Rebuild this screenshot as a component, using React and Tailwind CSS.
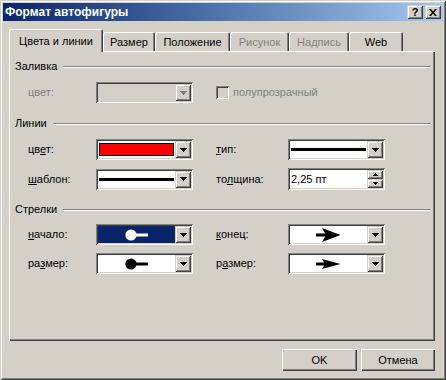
import React from "react";

const raised =
  "shadow-[inset_1px_1px_0_#d4d0c8,inset_-1px_-1px_0_#404040,inset_2px_2px_0_#ffffff,inset_-2px_-2px_0_#808080]";
const sunken =
  "shadow-[inset_1px_1px_0_#808080,inset_-1px_-1px_0_#ffffff,inset_2px_2px_0_#404040,inset_-2px_-2px_0_#d4d0c8]";
const pushBtn =
  "shadow-[inset_1px_1px_0_#ffffff,inset_-1px_-1px_0_#404040,inset_-2px_-2px_0_#808080]";

/* small pixel arrows */
function DownArrow({ gray }) {
  return (
    <svg width="7" height="4" viewBox="0 0 7 4" className="block">
      <path d="M0 0h7v1h-1v1h-1v1h-1v1h-1v-1h-1v-1h-1v-1h-1z" fill={gray ? "#808080" : "#000"} />
    </svg>
  );
}

function SpinArrow({ up }) {
  return (
    <svg width="5" height="3" viewBox="0 0 5 3" className="block">
      {up ? (
        <path d="M2 0h1v1h1v1h1v1h-5v-1h1v-1h1z" fill="#000" />
      ) : (
        <path d="M0 0h5v1h-1v1h-1v1h-1v-1h-1v-1h-1z" fill="#000" />
      )}
    </svg>
  );
}

function Combo({ children, disabled, navy }) {
  return (
    <div
      className={`w-[97px] h-[21px] p-[2px] flex ${sunken} ${disabled ? "bg-[#d4d0c8]" : "bg-white"}`}
    >
      <div className={`flex-1 flex items-center justify-center ${navy ? "bg-[#0a246a]" : ""}`}>
        {children}
      </div>
      <div className={`w-[16px] h-full bg-[#d4d0c8] flex items-center justify-center ${raised}`}>
        <DownArrow gray={disabled} />
      </div>
    </div>
  );
}

function Header({ title }) {
  return (
    <div className="flex items-center h-[13px] pl-[6px] pr-[4px]">
      <span>{title}</span>
      <div className="flex-1 ml-[6px] h-[2px] border-t border-t-[#808080] border-b border-b-white" />
    </div>
  );
}

function Ball({ color }) {
  return (
    <svg width="24" height="12" viewBox="0 0 24 12" className="block">
      <circle cx="6" cy="6" r="5.6" fill={color} />
      <rect x="10" y="4.5" width="13" height="3" fill={color} />
    </svg>
  );
}

function Arrow({ big }) {
  return big ? (
    <svg width="25" height="14" viewBox="0 0 25 14" className="block">
      <rect x="0" y="5.5" width="11" height="3" fill="#000" />
      <path d="M6 0 L24.5 7 L6 14 L10 7 Z" fill="#000" />
    </svg>
  ) : (
    <svg width="25" height="10" viewBox="0 0 25 10" className="block">
      <rect x="0" y="3.5" width="11" height="3" fill="#000" />
      <path d="M6 0 L24.5 5 L6 10 L9 5 Z" fill="#000" />
    </svg>
  );
}

const tabs = [
  { label: "Размер", w: "w-[52px]" },
  { label: "Положение", w: "w-[75px]" },
  { label: "Рисунок", w: "w-[59px]", off: true },
  { label: "Надпись", w: "w-[60px]", off: true },
  { label: "Web", w: "w-[54px]" },
];

export default function App() {
  return (
    <div
      className={`w-[446px] h-[380px] p-[3px] bg-[#d4d0c8] flex flex-col text-[11px] leading-[13px] text-black font-['Liberation_Sans',Arial,sans-serif] ${raised}`}
    >
      {/* title bar */}
      <div className="h-[18px] shrink-0 flex items-center justify-between pl-[2px] pr-[2px] bg-linear-to-r from-[#0a246a] to-[#a6caf0]">
        <span className="text-white font-bold text-[12px]">Формат автофигуры</span>
        <div className="flex gap-[2px]">
          <div className={`w-[16px] h-[14px] bg-[#d4d0c8] flex items-center justify-center font-bold text-[11px] leading-none ${raised}`}>
            ?
          </div>
          <div className={`w-[16px] h-[14px] bg-[#d4d0c8] flex items-center justify-center ${raised}`}>
            <svg width="8" height="7" viewBox="0 0 8 7" className="block">
              <path d="M0 0h2l2 2.5 2-2.5h2l-3 3.5 3 3.5h-2l-2-2.5-2 2.5h-2l3-3.5z" fill="#000" />
            </svg>
          </div>
        </div>
      </div>

      {/* tabs */}
      <div className="mt-[8px] ml-[6px] h-[22px] flex items-end">
        <div className="relative z-10 w-[94px] h-[23px] -mb-px bg-[#d4d0c8] rounded-t-[2px] pt-[6px] text-center shadow-[inset_1px_1px_0_#ffffff,inset_-1px_0_0_#404040,inset_-2px_0_0_#808080]">
          Цвета и линии
        </div>
        {tabs.map((t) => (
          <div
            key={t.label}
            className={`${t.w} h-[19px] pt-[4px] text-center rounded-t-[2px] shadow-[inset_1px_1px_0_#ffffff,inset_-1px_0_0_#404040,inset_-2px_0_0_#808080] ${t.off ? "text-[#808080]" : ""}`}
          >
            {t.label}
          </div>
        ))}
      </div>

      {/* panel */}
      <div className="ml-[6px] w-[426px] h-[290px] pt-[9px] shadow-[inset_1px_1px_0_#ffffff,inset_-1px_-1px_0_#404040,inset_-2px_-2px_0_#808080]">
        <Header title="Заливка" />
        <div className="mt-[9px] pl-[19px] grid grid-cols-[68px_97px_23px_auto] items-center">
          <span className="text-[#808080]">цвет:</span>
          <Combo disabled />
          <span />
          <div className="flex items-center">
            <div className={`w-[13px] h-[13px] bg-[#d4d0c8] ${sunken}`} />
            <span className="ml-[4px] text-[#808080]">полупрозрачный</span>
          </div>
        </div>

        <div className="mt-[14px]">
          <Header title="Линии" />
        </div>
        <div className="mt-[9px] pl-[19px] grid grid-cols-[68px_97px_23px_72px_97px] items-center">
          <span>
            цв<u>е</u>т:
          </span>
          <Combo>
            <div className="w-full h-full px-[1px] py-[2px]">
              <div className="w-full h-full bg-[#ff0000] border border-black" />
            </div>
          </Combo>
          <span />
          <span>
            <u>т</u>ип:
          </span>
          <Combo>
            <div className="w-full px-[1px]">
              <div className="h-[3px] bg-black" />
            </div>
          </Combo>
        </div>
        <div className="mt-[8px] pl-[19px] grid grid-cols-[68px_97px_23px_72px_97px] items-center">
          <span>
            <u>ш</u>аблон:
          </span>
          <Combo>
            <div className="w-full px-[1px]">
              <div className="h-[3px] bg-black" />
            </div>
          </Combo>
          <span />
          <span>
            то<u>л</u>щина:
          </span>
          <div className={`w-[97px] h-[22px] p-[2px] bg-white flex ${sunken}`}>
            <div className="flex-1 pl-[1px] flex items-center">2,25 пт</div>
            <div className="w-[16px] flex flex-col">
              <div className={`flex-1 bg-[#d4d0c8] flex items-center justify-center ${raised}`}>
                <SpinArrow up />
              </div>
              <div className={`flex-1 bg-[#d4d0c8] flex items-center justify-center ${raised}`}>
                <SpinArrow />
              </div>
            </div>
          </div>
        </div>

        <div className="mt-[13px]">
          <Header title="Стрелки" />
        </div>
        <div className="mt-[8px] pl-[19px] grid grid-cols-[68px_97px_23px_72px_97px] items-center">
          <span>
            <u>н</u>ачало:
          </span>
          <Combo navy>
            <Ball color="#ffffff" />
          </Combo>
          <span />
          <span>
            <u>к</u>онец:
          </span>
          <Combo>
            <Arrow big />
          </Combo>
        </div>
        <div className="mt-[8px] pl-[19px] grid grid-cols-[68px_97px_23px_72px_97px] items-center">
          <span>
            ра<u>з</u>мер:
          </span>
          <Combo>
            <Ball color="#000000" />
          </Combo>
          <span />
          <span>
            р<u>а</u>змер:
          </span>
          <Combo>
            <Arrow />
          </Combo>
        </div>
      </div>

      {/* buttons */}
      <div className="mt-[8px] mr-[8px] flex justify-end gap-[4px]">
        <button className={`w-[75px] h-[22px] bg-[#d4d0c8] ${pushBtn}`}>OK</button>
        <button className={`w-[74px] h-[22px] bg-[#d4d0c8] ${pushBtn}`}>Отмена</button>
      </div>
    </div>
  );
}
